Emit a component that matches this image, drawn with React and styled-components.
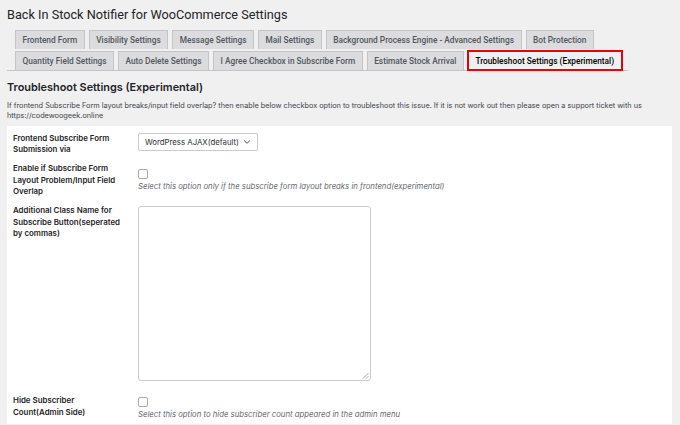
import React from "react";
import styled, { createGlobalStyle } from "styled-components";

const Global = createGlobalStyle`
  html, body { margin: 0; padding: 0; background: #f0f0f1; }
  body { font-family: Inter, "Noto Sans", sans-serif; color: #1d2327; }
  * { box-sizing: border-box; }
`;

const Page = styled.div`
  padding: 6px 8px 0 7px;
  width: 680px;
  height: 425px;
  overflow: hidden;
`;

const Title = styled.h1`
  margin: 0;
  font-family: Roboto, sans-serif;
  font-size: 12.7px;
  font-weight: 400;
  line-height: 18px;
  color: #1d2327;
`;

const TabBar = styled.nav`
  display: flex;
  flex-wrap: wrap;
  row-gap: 2px;
  column-gap: 4px;
  margin-top: 6px;
  padding-left: 8px;
  border-bottom: 1px solid #c3c4c7;
  width: 621px;
`;

const Tab = styled.span`
  display: inline-flex;
  align-items: center;
  height: 19px;
  padding: 0 6.5px;
  font-family: Roboto, sans-serif;
  font-size: 8.32px;
  font-weight: 500;
  color: #50575e;
  background: ${(p) => (p.$active ? "#f0f0f1" : "#dcdcde")};
  border: 1px solid #c3c4c7;
  border-bottom: ${(p) => (p.$active ? "1px solid #f0f0f1" : "none")};
  margin-bottom: ${(p) => (p.$active ? "-1px" : "0")};
  white-space: nowrap;
  ${(p) =>
    p.$active &&
    `
    color: #000;
    outline: 2px solid #e8000b;
    outline-offset: -1px;
  `}
`;

const Heading = styled.h2`
  margin: 9px 0 0 0;
  font-size: 10.9px;
  font-weight: 600;
  line-height: 14px;
  color: #1d2327;
`;

const Intro = styled.p`
  margin: 7px 0 0 0;
  font-size: 7.3px;
  line-height: 10px;
  color: #3c434a;
`;

const Panel = styled.div`
  margin-top: 5px;
  width: 665px;
  background: #fff;
  padding: 3px 0 0 6px;
  height: 298px;
`;

const Row = styled.div`
  display: grid;
  grid-template-columns: 125px 1fr;
  padding: 3.75px 0;
`;

const Label = styled.div`
  font-size: 7.9px;
  font-weight: 600;
  line-height: 11.5px;
  color: #1d2327;
  width: 111px;
`;

const Field = styled.div`
  display: flex;
  flex-direction: column;
  align-items: flex-start;
  padding-top: ${(p) => p.$pt || 0}px;
`;

const Select = styled.div`
  width: 120px;
  height: 18px;
  border: 1px solid #c9cbcf;
  border-radius: 2px;
  display: flex;
  align-items: center;
  justify-content: space-between;
  padding: 0 6px;
  font-size: 7.8px;
  color: #2c3338;
  background: #fff;
`;

const Checkbox = styled.span`
  display: block;
  width: 10px;
  height: 10px;
  border: 1px solid #a7aaad;
  border-radius: 2px;
  background: #fff;
`;

const Desc = styled.p`
  margin: ${(p) => p.$mt || 2}px 0 0 0;
  font-size: 7.75px;
  line-height: 10px;
  font-style: italic;
  color: #646970;
`;

const TextArea = styled.div`
  position: relative;
  width: 233px;
  height: 175px;
  margin-bottom: 6.5px;
  border: 1px solid #c9cbcf;
  border-radius: 3px;
  background: #fff;
`;

const Grip = styled.svg`
  position: absolute;
  right: 1px;
  bottom: 1px;
`;

const tabsRow = [
  "Frontend Form",
  "Visibility Settings",
  "Message Settings",
  "Mail Settings",
  "Background Process Engine - Advanced Settings",
  "Bot Protection",
  "Quantity Field Settings",
  "Auto Delete Settings",
  "I Agree Checkbox in Subscribe Form",
  "Estimate Stock Arrival",
];

export default function App() {
  return (
    <>
      <Global />
      <Page>
        <Title>Back In Stock Notifier for WooCommerce Settings</Title>
        <TabBar>
          {tabsRow.map((t) => (
            <Tab key={t}>{t}</Tab>
          ))}
          <Tab $active>Troubleshoot Settings (Experimental)</Tab>
        </TabBar>
        <Heading>Troubleshoot Settings (Experimental)</Heading>
        <Intro>
          If frontend Subscribe Form layout breaks/input field overlap? then enable below checkbox option to troubleshoot this issue. If it is not work out then please open a support ticket with us
          <br />
          https://codewoogeek.online
        </Intro>
        <Panel>
          <Row>
            <Label>Frontend Subscribe Form Submission via</Label>
            <Field>
              <Select>
                <span>WordPress AJAX(default)</span>
                <svg width="8" height="6" viewBox="0 0 8 6">
                  <path d="M1.2 1.6 L4 4.3 L6.8 1.6" fill="none" stroke="#50575e" strokeWidth="1" />
                </svg>
              </Select>
            </Field>
          </Row>
          <Row>
            <Label>Enable if Subscribe Form Layout Problem/Input Field Overlap</Label>
            <Field $pt={6}>
              <Checkbox />
              <Desc $mt={2}>Select this option only if the subscribe form layout breaks in frontend(experimental)</Desc>
            </Field>
          </Row>
          <Row>
            <Label>Additional Class Name for Subscribe Button(seperated by commas)</Label>
            <Field $pt={1}>
              <TextArea>
                <Grip width="7" height="7" viewBox="0 0 7 7">
                  <path d="M6.5 1 L1 6.5 M6.5 4 L4 6.5" stroke="#8c8f94" strokeWidth="0.8" />
                </Grip>
              </TextArea>
            </Field>
          </Row>
          <Row>
            <Label>Hide Subscriber Count(Admin Side)</Label>
            <Field $pt={2}>
              <Checkbox />
              <Desc $mt={2}>Select this option to hide subscriber count appeared in the admin menu</Desc>
            </Field>
          </Row>
        </Panel>
      </Page>
    </>
  );
}
